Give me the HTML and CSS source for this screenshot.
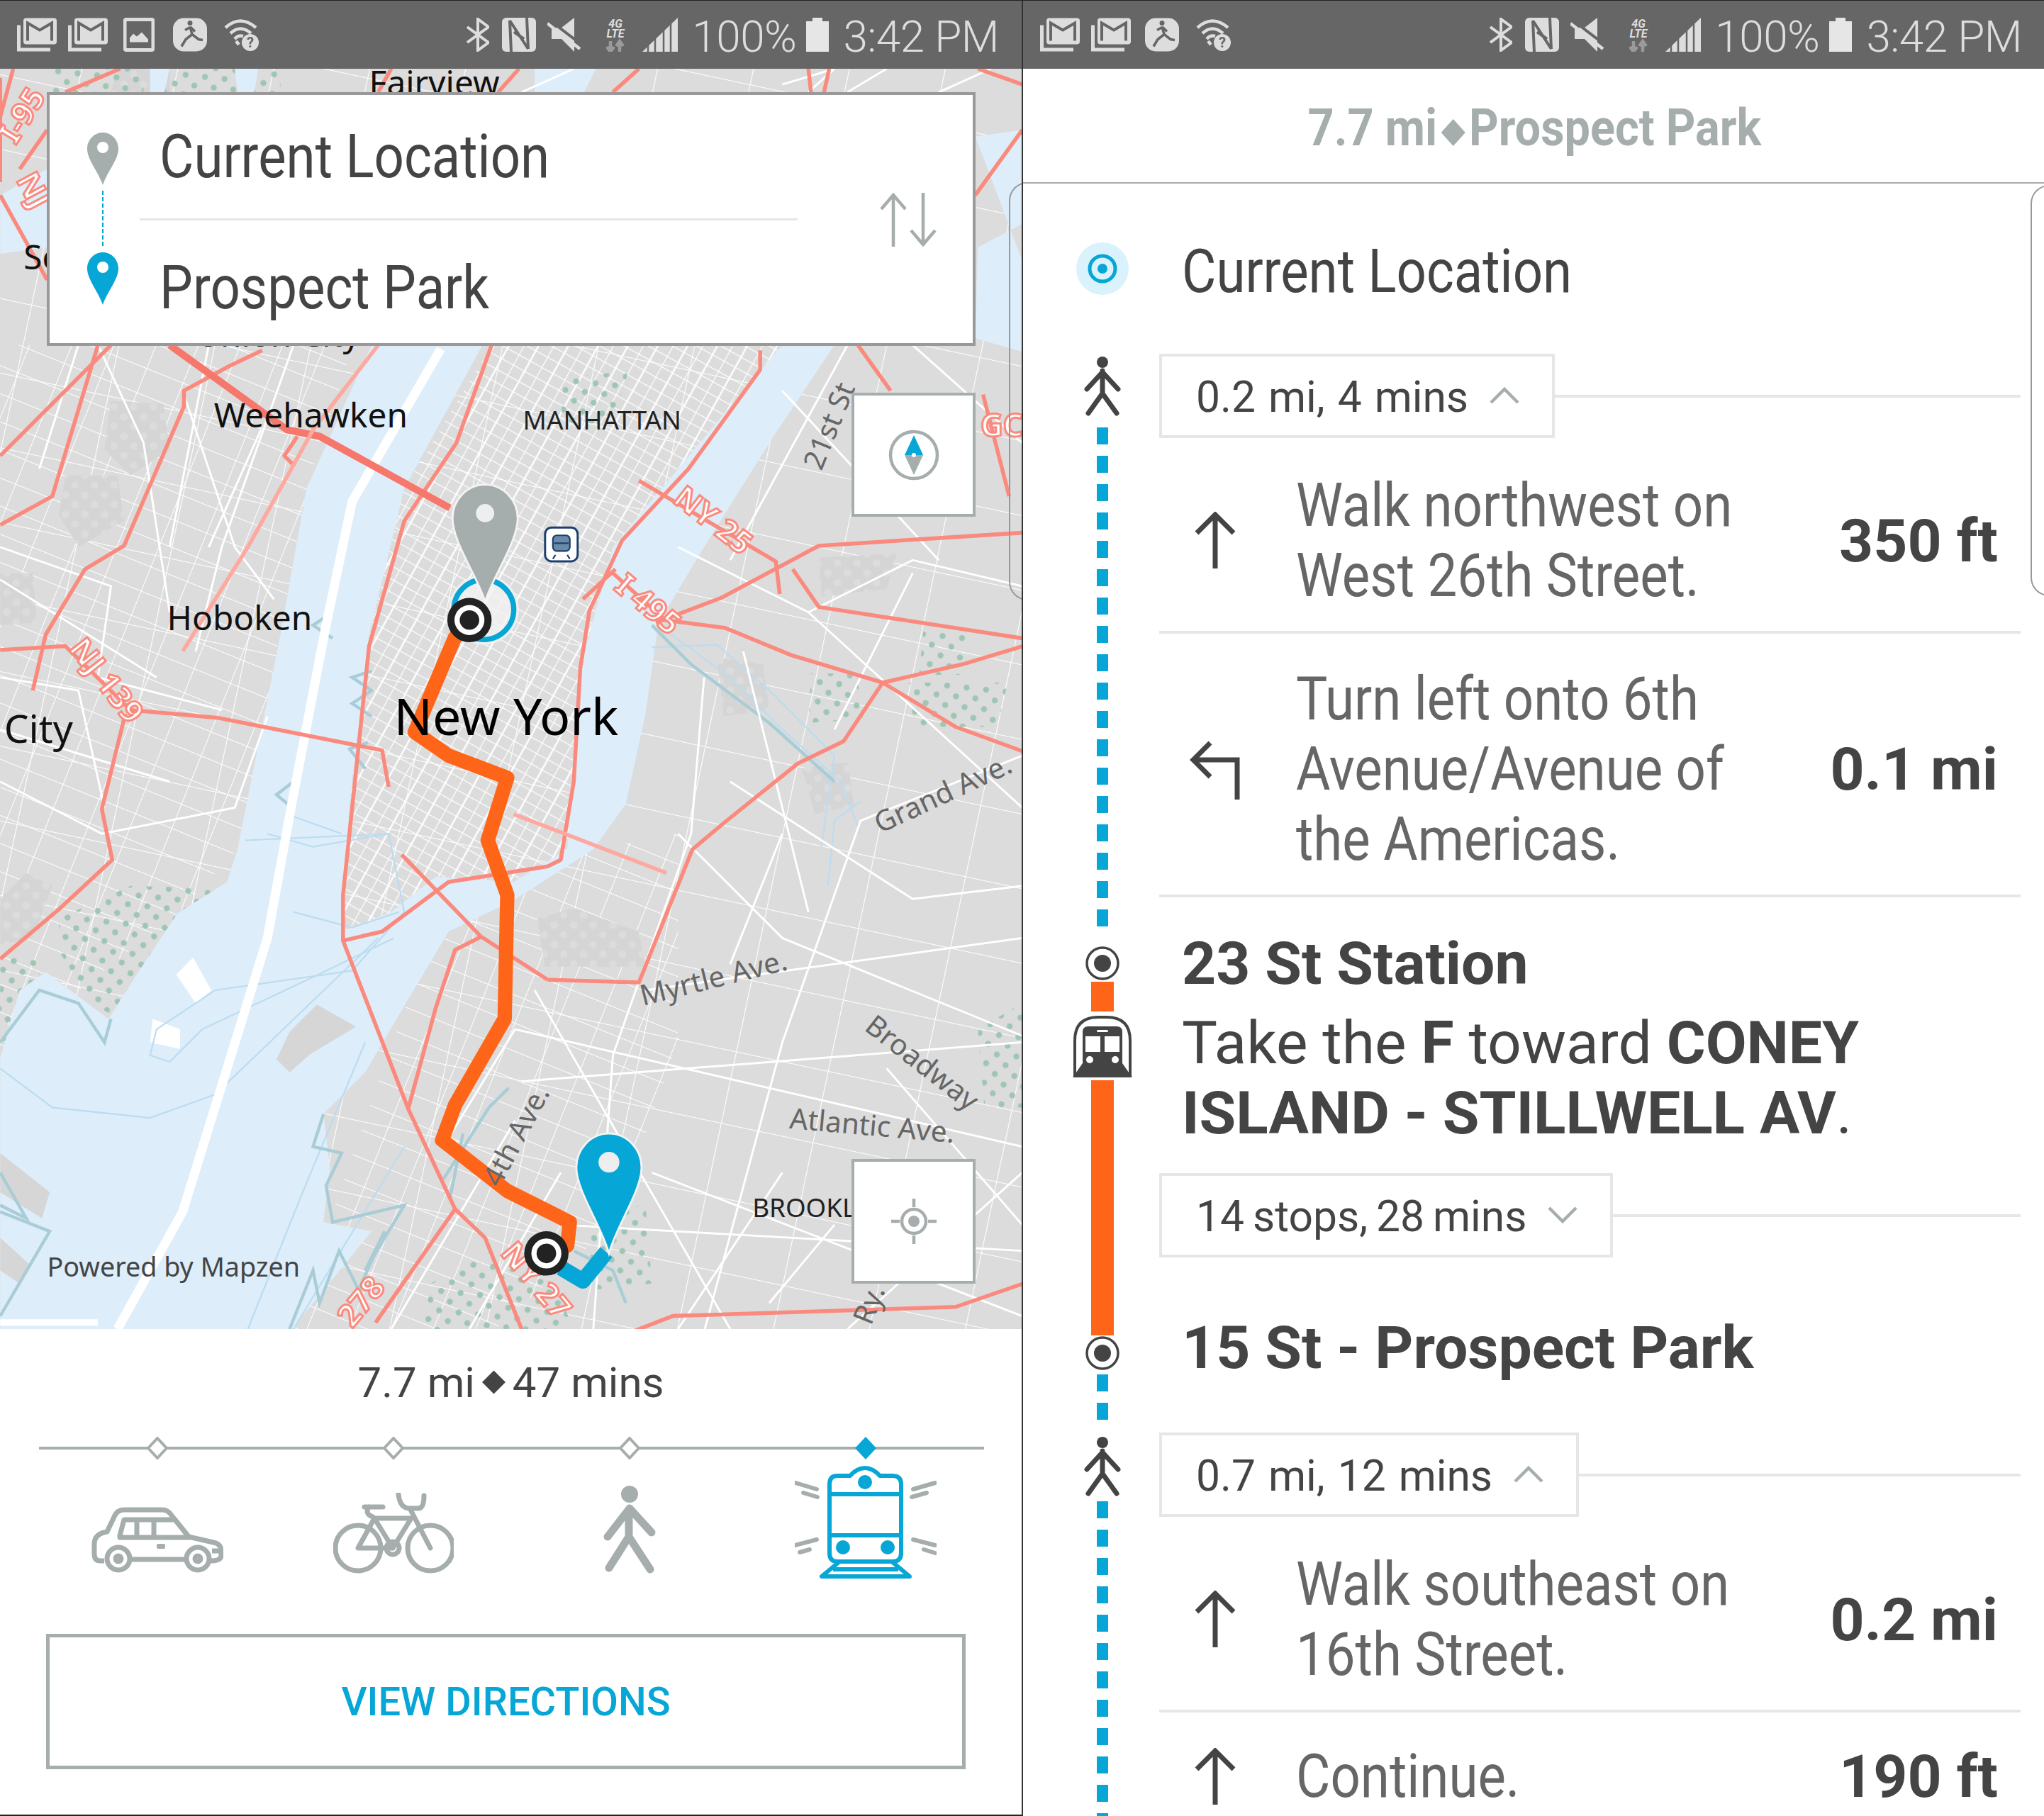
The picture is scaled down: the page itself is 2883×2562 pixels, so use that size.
FILE: index.html
```html
<!DOCTYPE html>
<html lang="en">
<head>
<meta charset="utf-8">
<title>Route directions</title>
<link rel="stylesheet" href="styles.css">
</head>
<body>
<svg class="defs" width="0" height="0" aria-hidden="true">
  <defs>
    <symbol id="i-mail" viewBox="0 0 56 47">
      <path d="M2.500 10V44.500H47" fill="none" stroke="#ddd" stroke-width="5"/>
      <rect x="9" y="0" width="47" height="37" rx="4" fill="#ddd"/>
      <path d="M15 32V7L32 17L49 7V32" fill="none" stroke="#666" stroke-width="4"/>
    </symbol>
    <symbol id="i-pic" viewBox="0 0 44 47">
      <rect x="2" y="2" width="40" height="43" rx="2" fill="none" stroke="#ddd" stroke-width="5"/>
      <path d="M9 34V28L14 22L19 26L26 20L35 30V34Z" fill="#ddd"/>
    </symbol>
    <symbol id="i-run" viewBox="0 0 48 47">
      <rect x="0" y="0" width="48" height="47" rx="15" fill="#ddd"/>
      <circle cx="24" cy="7" r="3.500" fill="#666"/>
      <path d="M24 12L27 23L36 30L42 31M27 23L18 30L12 40M24 13L17 17M25 13L31 19" fill="none" stroke="#666" stroke-width="3.500"/>
    </symbol>
    <symbol id="i-wifi" viewBox="0 0 49 46">
      <path d="M2 13Q23 -6 45 13M9 21Q23 8 38 21M15 29Q20 23 27 25M21 37L17 32" fill="none" stroke="#ddd" stroke-width="4.500"/>
      <circle cx="37" cy="34" r="12" fill="#ddd"/>
      <text x="37" y="41" class="wifi-q">?</text>
    </symbol>
    <symbol id="i-bt" viewBox="0 0 32 48">
      <path d="M1 13L31 35L16 46V2L31 13L1 35" fill="none" stroke="#ddd" stroke-width="4"/>
    </symbol>
    <symbol id="i-nfc" viewBox="0 0 48 48">
      <rect x="0" y="0" width="48" height="48" rx="6" fill="#ddd"/>
      <path d="M13 48L11 4M35 0L37 44M11 4L37 44M17 20L31 30" fill="none" stroke="#666" stroke-width="4"/>
    </symbol>
    <symbol id="i-mute" viewBox="0 0 48 48">
      <path d="M38 0V48L20 30H6V14H20Z" fill="#ddd"/>
      <path d="M0 8L46 44" stroke="#ddd" stroke-width="4.500"/>
      <path d="M0 1L47 37" stroke="#666" stroke-width="4"/>
    </symbol>
    <symbol id="i-lte" viewBox="0 0 30 48">
      <text x="15" y="14" class="lte">4G</text>
      <text x="15" y="28" class="lte">LTE</text>
      <path d="M8 33V47M3 41L8 48L13 41M21 48V34M16 40L21 33L26 40" fill="none" stroke="#9a9a9a" stroke-width="4.500"/>
    </symbol>
    <symbol id="i-signal" viewBox="0 0 50 48">
      <path d="M0 48L50 0V48Z" fill="#ddd"/>
      <path d="M8 48V30M18 48V20M30 48V10M40 48V2" stroke="#666" stroke-width="2.500"/>
    </symbol>
    <symbol id="i-bat" viewBox="0 0 32 48">
      <path d="M9 0H23V5H32V48H0V5H9Z" fill="#e6e6e6"/>
    </symbol>
    <symbol id="i-stop" viewBox="0 0 48 48">
      <circle cx="24" cy="24" r="22" fill="#fff" stroke="#444" stroke-width="3.500"/>
      <circle cx="24" cy="24" r="12" fill="#444"/>
    </symbol>
    <symbol id="i-walk" viewBox="0 0 52 86">
      <circle cx="26" cy="8" r="8" fill="#444"/>
      <path d="M26 20L26 52L6 80M26 52L46 80M26 22L4 46M26 22L48 46" fill="none" stroke="#444" stroke-width="7" stroke-linecap="round"/>
    </symbol>
    <symbol id="i-up" viewBox="0 0 60 82">
      <path d="M30 80V4M4 30L30 4L56 30" fill="none" stroke="#444" stroke-width="7"/>
    </symbol>
    <symbol id="i-left" viewBox="0 0 74 84">
      <path d="M68 84V28H6M30 4L6 28L30 52" fill="none" stroke="#444" stroke-width="7"/>
    </symbol>
    <pattern id="p-park" width="15" height="15" patternUnits="userSpaceOnUse" patternTransform="rotate(6)">
      <circle cx="5" cy="5" r="2.300" fill="#9fc6b4"/>
      <circle cx="12.500" cy="12.500" r="2.300" fill="#9fc6b4"/>
    </pattern>
    <pattern id="p-gray" width="15" height="15" patternUnits="userSpaceOnUse">
      <rect width="15" height="15" fill="#d5d5d5"/>
      <circle cx="5" cy="5" r="3" fill="#dcdcdc"/>
      <circle cx="12.500" cy="12.500" r="3" fill="#dcdcdc"/>
    </pattern>
    <pattern id="p-dense" width="20" height="9" patternUnits="userSpaceOnUse" patternTransform="rotate(29)">
      <path d="M0 0H20M0 0V9M10 0V9" stroke="#fff" stroke-width="1.300"/>
    </pattern>
    <pattern id="p-mid" width="30" height="20" patternUnits="userSpaceOnUse" patternTransform="rotate(22)">
      <path d="M0 0H30M0 0V20" stroke="#fff" stroke-width="1.100"/>
    </pattern>
    <pattern id="p-sparse" width="72" height="56" patternUnits="userSpaceOnUse" patternTransform="rotate(12)">
      <path d="M0 0H72M0 0V56" stroke="#fff" stroke-width="1.200"/>
    </pattern>
  </defs>
</svg>

<main class="page">
  <section class="phone">
    <header class="status">
      <div class="status-left">
        <svg class="si si-mail"><use href="#i-mail"/></svg>
        <svg class="si si-mail"><use href="#i-mail"/></svg>
        <svg class="si si-pic"><use href="#i-pic"/></svg>
        <svg class="si si-run"><use href="#i-run"/></svg>
        <svg class="si si-wifi"><use href="#i-wifi"/></svg>
      </div>
      <div class="status-right">
        <svg class="si si-bt"><use href="#i-bt"/></svg>
        <svg class="si si-nfc"><use href="#i-nfc"/></svg>
        <svg class="si si-mute"><use href="#i-mute"/></svg>
        <svg class="si si-lte"><use href="#i-lte"/></svg>
        <svg class="si si-signal"><use href="#i-signal"/></svg>
        <span class="s-text s-pct">100%</span>
        <svg class="si si-bat"><use href="#i-bat"/></svg>
        <span class="s-text s-time">3:42 PM</span>
      </div>
    </header>

    <div class="map">
      <svg class="map-svg" viewBox="0 53 784 967" width="1442" height="1778">
        <rect x="0" y="53" width="784" height="967" fill="#dcdcdc"/>
        <rect x="0" y="53" width="784" height="967" fill="url(#p-sparse)"/>
        <path d="M0 265H271L235 375L215 487L182 652L136 701L60 760L0 790Z" fill="url(#p-mid)"/>
        <path d="M313 767L344 715L394 691L455 652L520 640L520 800L470 940L380 1020L222 1022Z" fill="url(#p-mid)"/>
        <path d="M377 265L310 375L283 487L268 617L263 715L300 700L334 673L394 677L435 652L445 513L470 420L520 360L570 300L600 265Z" fill="url(#p-dense)"/>

        <g class="gray-parks">
          <path d="M85 308L125 310L130 345L100 365L80 345Z"/>
          <path d="M50 365L90 365L95 400L60 420L45 395Z"/>
          <path d="M628 428L688 425L680 452L630 458Z"/>
          <path d="M0 440L25 440L28 478L0 480Z"/>
          <path d="M412 705L440 697L490 715L495 742L418 742Z"/>
          <path d="M615 590L650 585L655 618L625 625Z"/>
          <path d="M550 505L585 510L590 545L555 550Z"/>
          <path d="M0 690L20 670L40 680L25 720L0 725Z"/>
          <path d="M90 53H130V71H85Z"/>
        </g>
        <g class="parks">
          <path d="M432 290L482 285L470 325L430 325Z"/>
          <path d="M622 517L657 517L662 552L620 555Z"/>
          <path d="M697 524L773 524L765 558L700 558Z"/>
          <path d="M708 485L743 485L740 518L705 518Z"/>
          <path d="M45 705L100 680L172 682L172 692L130 735L105 790L70 770L45 730Z"/>
          <path d="M0 735L30 735L30 790L0 800Z"/>
          <path d="M330 985L365 965L425 985L440 1020H325Z"/>
          <path d="M750 790L784 770V850L755 850Z"/>
          <path d="M450 930L495 925L500 985L455 990Z"/>
          <path d="M40 53H110V71H40Z"/>
          <path d="M125 53H215V71H125Z"/>
        </g>

        <path class="water" d="M285 265H370L310 375L283 487L268 617L263 690L263 715L300 700L334 673L394 677L435 652L445 513L470 420L520 360L570 300L600 265H640L590 340L540 420L510 470L505 478L495 548L480 617L455 652L394 691L344 715L313 767L280 823L248 855L253 896L248 938L285 945L222 1022H0V812L15 760L35 746L83 782L106 746L136 701L174 677L182 652L215 487L235 375Z"/>
        <path class="water" d="M410 53H457L448 71H410Z"/>
        <path class="water" d="M115 53H130L126 71H115Z"/>
        <path class="water" d="M180 53H198L195 71H182Z"/>
        <path class="water" d="M748 105L784 100V172L750 190L748 260L784 270V200Z"/>
        <path class="water" d="M0 150L36 130V190L0 195Z"/>
        <path class="land" d="M243 771L273 788L238 809L222 823L212 813L222 792Z"/>
        <path class="land" d="M0 885L38 915L32 935L0 915Z"/>
        <path class="land" d="M0 950L22 970L15 985L0 975Z"/>
        <path class="white" d="M148 735L162 760L150 770L135 748Z"/>
        <path class="white" d="M117 782L138 790L138 805L115 800Z"/>

        <g class="ferry">
          <path d="M205 640L240 650L298 640L310 700L270 745L165 760L120 790L115 810L130 815L155 790L240 750L302 720"/>
          <path d="M0 820L40 850L115 858L165 840L290 720"/>
          <path d="M225 700L270 712L306 700"/>
          <path d="M190 1020L230 920L280 800"/>
          <path d="M225 1020L310 880"/>
          <path d="M220 625L262 640M188 645L300 640"/>
          <path d="M505 480L560 520L600 560L645 600L660 640"/>
          <path d="M500 497L550 495L590 530L640 580L630 650M660 615L640 630L635 680"/>
        </g>
        <g class="shore">
          <path d="M0 800L30 760L60 770L80 800L85 782"/>
          <path d="M248 855L240 880L262 885L250 910L255 938L310 925L280 975L295 945L275 990L260 960L245 1000L240 975L222 1020"/>
          <path d="M340 905L375 850L390 835M355 870L345 920"/>
          <path d="M0 1010L38 945L0 930"/>
          <path d="M0 925L20 935L0 900"/>
          <path d="M500 480L530 510L590 555L640 600"/>
          <path d="M440 960L470 975L480 1000"/>
          <path d="M285 515L270 520L285 530L270 540L285 550M282 570L268 575L280 590M255 470L240 480L255 490M225 600L212 610L224 620"/>
        </g>
        <path class="stripe" d="M338 268L270 385L250 480L225 610L205 720L140 930L90 1020"/>
        <path class="stripe thin" d="M0 1015H75"/>

        <g class="roads">
          <path d="M0 420L85 450L75 520L170 545M0 520L60 530L80 620M0 600L78 640L180 620L205 550"/>
          <path d="M140 300L180 420L210 460M75 265L110 340L130 470M200 330L160 420"/>
          <path d="M520 640L600 720L784 795M540 520L530 640L470 810L455 1020M570 500L620 700M620 470L784 620"/>
          <path d="M495 760L784 720M395 790L784 880M430 940L784 960M400 830L784 800M410 760L560 1020"/>
          <path d="M600 300L720 430M650 265L560 430M700 265L784 340M520 420L620 470L700 430L784 450"/>
          <path d="M540 1022L600 800L660 630L784 580M680 820L784 940M650 1020L784 900M590 1000L640 940"/>
          <path d="M600 65L640 53M440 53L400 71M620 71L640 53M650 71L680 53M720 71L760 53"/>
          <path d="M340 880L395 790M300 1020L395 860M360 1020L430 900"/>
          <path d="M0 445L120 520M0 560L130 600M60 265L30 360M160 265L130 420M225 265L170 420L150 500"/>
          <path d="M560 600L700 690L784 680M600 640L560 740M700 440L640 560M500 900L784 1010M520 1020L600 900"/>
        </g>

        <g class="hw">
          <path d="M0 350L60 290L85 265"/>
          <path d="M75 265L40 381L0 403"/>
          <path d="M201 269L176 281L141 300L141 312L95 419L65 437L35 487L25 530"/>
          <path d="M377 265L350 340L310 400L283 496L263 687L263 722L313 851L349 928L288 1015"/>
          <path d="M0 499L50 496L100 545L167 551L293 576L298 604"/>
          <path d="M96 548L78 621L86 660L45 698L0 736"/>
          <path d="M583 269L583 284L528 360L477 415L452 469L445 513L440 600L430 660L420 665L344 677L293 715L263 722"/>
          <path d="M420 752L490 754L531 652L556 631L612 586L647 569L677 524L738 510L788 495"/>
          <path d="M677 524L607 503L556 482L510 476L470 440"/>
          <path d="M677 524L733 558L788 578"/>
          <path d="M308 656L369 719L420 752"/>
          <path d="M369 719L349 729L334 774L313 851"/>
          <path d="M490 369L595 431L598 456"/>
          <path d="M784 409L628 419L553 459L503 478"/>
          <path d="M608 437L628 466L784 490"/>
          <path d="M658 265L683 300"/>
          <path d="M754 303L774 381"/>
          <path d="M447 460L472 437"/>
          <path d="M485 1022L516 1010L733 1003L788 984"/>
          <path d="M0 60L0 140M10 53L0 90M15 130L36 100M92 53L50 71M290 71L300 53M382 71L398 53M470 71L490 53M620 53L622 71M636 53L632 71"/>
          <path d="M748 150L784 100"/>
          <path d="M0 150L36 215"/>
          <path d="M400 1020L372 950L349 928"/>
          <path d="M750 53L784 65"/>
          <path d="M228 335L218 350L226 358"/>
        </g>
        <path class="hw-thick" d="M130 265L220 330L245 335L345 390"/>
        <path class="hw-pale" d="M394 625L511 670"/>
        <path class="hw-pale" d="M290 265L240 330L190 420L140 500"/>

        <path class="route-walk" d="M430 973L447 983L465 961"/>
        <path class="route" d="M349 489L318 562L344 580L389 597L374 645L389 687L387 782L349 848L339 875L389 914L437 938L435 956"/>

        <text class="lb lb-city" x="283" y="73">Fairview</text>
        <text class="lb lb-city" x="18" y="207">Sc</text>
        <text class="lb lb-city" x="150" y="266">Union City</text>
        <text class="lb lb-city" x="164" y="328">Weehawken</text>
        <text class="lb lb-small" x="401" y="330">MANHATTAN</text>
        <text class="lb lb-city" x="128" y="484">Hoboken</text>
        <text class="lb lb-big" x="3" y="570">City</text>
        <text class="lb lb-ny" x="302" y="564">New York</text>
        <text class="lb lb-small" x="577" y="934">BROOKLYN</text>
        <text class="lb lb-road" transform="translate(630 362) rotate(-68)">21st St</text>
        <text class="lb lb-road" transform="translate(675 640) rotate(-25)">Grand Ave.</text>
        <text class="lb lb-road" transform="translate(493 772) rotate(-14)">Myrtle Ave.</text>
        <text class="lb lb-road" transform="translate(662 790) rotate(38)">Broadway</text>
        <text class="lb lb-road" transform="translate(605 866) rotate(5)">Atlantic Ave.</text>
        <text class="lb lb-road" transform="translate(383 912) rotate(-62)">4th Ave.</text>
        <text class="lb lb-road" transform="translate(668 1018) rotate(-68)">Ry.</text>
        <text class="lb lb-credit" x="36" y="980">Powered by Mapzen</text>

        <text class="shield" transform="translate(52 498) rotate(52)">NJ 139</text>
        <text class="shield" transform="translate(515 385) rotate(38)">NY 25</text>
        <text class="shield" transform="translate(470 452) rotate(40)">I 495</text>
        <text class="shield" transform="translate(383 962) rotate(50)">NY 27</text>
        <text class="shield" transform="translate(270 1020) rotate(-50)">278</text>
        <text class="shield" transform="translate(12 138) rotate(62)">NJ</text>
        <text class="shield" transform="translate(12 112) rotate(-58)">I-95</text>
        <text class="shield" x="752" y="335">GC</text>

        <g class="transit-sign">
          <rect x="418" y="405" width="25" height="26" rx="5" fill="#fff" stroke="#1d3f6e" stroke-width="1.600"/>
          <rect x="424" y="411" width="13" height="12" rx="3" fill="#6a8aa8" stroke="#1d3f6e" stroke-width="1.200"/>
          <path d="M425 417H436M426 426L424 429M435 426L437 429" stroke="#1d3f6e" stroke-width="1.200"/>
        </g>
        <circle cx="371" cy="468" r="27" fill="#f2f2f2" opacity=".8"/>
        <circle cx="371" cy="468" r="23" fill="none" stroke="#06a6d6" stroke-width="4"/>
        <path d="M372 372C358 372 347 384 347 398C347 416 366 442 372 462C378 442 397 416 397 398C397 384 386 372 372 372Z" fill="#a6adad" stroke="#f4f4f4" stroke-width="1.500"/>
        <circle cx="372" cy="394" r="7" fill="#eee"/>
        <circle cx="360" cy="476" r="17" fill="#222"/>
        <circle cx="360" cy="476" r="11.500" fill="#fff"/>
        <circle cx="360" cy="476" r="7.500" fill="#222"/>
        <circle cx="419" cy="962" r="17" fill="#222"/>
        <circle cx="419" cy="962" r="11.500" fill="#fff"/>
        <circle cx="419" cy="962" r="7.500" fill="#222"/>
        <path d="M467 870C453 870 442 882 442 896C442 914 461 940 467 962C473 940 492 914 492 896C492 882 481 870 467 870Z" fill="#06a6d6" stroke="#f4f4f4" stroke-width="1.500"/>
        <circle cx="467" cy="892" r="8" fill="#eee"/>
      </svg>

      <div class="edge edge-map"></div>

      <div class="search-card">
        <div class="pins">
          <svg class="pin" viewBox="0 0 44 74"><path d="M22 0C10 0 0 10 0 23C0 38 16 56 22 74C28 56 44 38 44 23C44 10 34 0 22 0Z" fill="#a6adad"/><circle cx="22" cy="21" r="8" fill="#fff"/></svg>
          <div class="pin-link"></div>
          <svg class="pin" viewBox="0 0 44 74"><path d="M22 0C10 0 0 10 0 23C0 38 16 56 22 74C28 56 44 38 44 23C44 10 34 0 22 0Z" fill="#06a6d6"/><circle cx="22" cy="21" r="8" fill="#fff"/></svg>
        </div>
        <div class="places">
          <div class="place place-from"><span class="cond">Current Location</span></div>
          <div class="place place-to"><span class="cond">Prospect Park</span></div>
        </div>
        <svg class="swap" viewBox="0 0 80 76"><path d="M19 76V3M2 23L19 3L36 23M61 0V73M44 53L61 73L78 53" fill="none" stroke="#a6adad" stroke-width="4.500"/></svg>
      </div>

      <button class="map-btn map-btn-compass" type="button" aria-label="Compass">
        <svg viewBox="0 0 80 80" class="map-btn-ic"><circle cx="40" cy="40" r="33" fill="none" stroke="#a6adad" stroke-width="4.500"/><path d="M27 40L40 12L53 40Z" fill="#06a6d6"/><path d="M27 40L40 68L53 40Z" fill="#a6adad"/><circle cx="40" cy="40" r="3" fill="#fff"/></svg>
      </button>
      <button class="map-btn map-btn-locate" type="button" aria-label="Locate">
        <svg viewBox="0 0 80 80" class="map-btn-ic"><circle cx="40" cy="40" r="17" fill="none" stroke="#a6adad" stroke-width="4.500"/><circle cx="40" cy="40" r="8" fill="#a6adad"/><path d="M40 8V20M40 60V72M8 40H20M60 40H72" stroke="#a6adad" stroke-width="4.500"/></svg>
      </button>
    </div>

    <div class="trip">
      <div class="summary">
        <span>7.7 mi</span><svg class="dia" viewBox="0 0 32 32"><path d="M16 0L32 16L16 32L0 16Z" fill="#444"/></svg><span>47 mins</span>
      </div>
      <div class="modes">
        <div class="mode">
          <svg class="dia-mode" viewBox="0 0 30 32"><path d="M15 2L28 16L15 30L2 16Z" fill="#fff" stroke="#a6adad" stroke-width="4"/></svg>
          <svg class="m-car" viewBox="0 0 186 94">
            <g fill="none" stroke="#a6adad" stroke-width="7" stroke-linejoin="round">
              <path d="M18 76H12Q4 76 4 66V52Q4 38 22 35L32 14Q36 4 46 4H100Q108 4 113 12L137 42L172 50Q183 52 183 62V68Q183 76 168 76"/>
              <path d="M54 74H132"/>
              <path d="M40 40L46 18H118L138 43H40Z"/>
              <path d="M64 18V42M88 18V42M170 62H184"/>
              <circle cx="38" cy="73" r="16"/><circle cx="150" cy="73" r="16"/>
              <circle cx="38" cy="73" r="4"/><circle cx="150" cy="73" r="4"/>
            </g>
            <rect x="92" y="52" width="12" height="7" rx="2" fill="#a6adad"/>
          </svg>
        </div>
        <div class="mode">
          <svg class="dia-mode" viewBox="0 0 30 32"><path d="M15 2L28 16L15 30L2 16Z" fill="#fff" stroke="#a6adad" stroke-width="4"/></svg>
          <svg class="m-bike" viewBox="0 0 170 114">
            <g fill="none" stroke="#a6adad" stroke-width="7" stroke-linejoin="round" stroke-linecap="round">
              <circle cx="35" cy="78" r="32"/><circle cx="137" cy="78" r="32"/>
              <path d="M58 36H110M58 36L35 78H84M58 36L84 78L110 36"/>
              <path d="M108 22L137 78M108 22H120Q128 22 128 4M108 22Q94 22 92 2"/>
              <path d="M44 20H70M50 20Q44 30 56 34"/>
              <circle cx="84" cy="78" r="9"/>
            </g>
          </svg>
        </div>
        <div class="mode">
          <svg class="dia-mode" viewBox="0 0 30 32"><path d="M15 2L28 16L15 30L2 16Z" fill="#fff" stroke="#a6adad" stroke-width="4"/></svg>
          <svg class="m-walk" viewBox="0 0 74 124">
            <circle cx="37" cy="12" r="12" fill="#a6adad"/>
            <path d="M37 32L6 72M37 32L68 66M36 34L36 72L8 116M36 72L66 118" fill="none" stroke="#a6adad" stroke-width="11" stroke-linecap="round"/>
          </svg>
        </div>
        <div class="mode">
          <svg class="dia-mode" viewBox="0 0 30 32"><path d="M15 0L30 16L15 32L0 16Z" fill="#06a6d6"/></svg>
          <svg class="m-train" viewBox="40 52 200 162">
            <g fill="none" stroke="#06a6d6" stroke-width="6" stroke-linejoin="round">
              <path d="M100 66H118Q128 55 139 55Q150 55 160 66H178Q190 66 190 78V175Q190 187 178 187H100Q89 187 89 175V78Q89 66 100 66Z"/>
              <path d="M89 92H190M89 150H190"/>
              <path d="M102 188L78 208H202L178 188M94 198H186"/>
            </g>
            <circle cx="139" cy="75" r="10" fill="#06a6d6"/><circle cx="108" cy="167" r="10" fill="#06a6d6"/><circle cx="171" cy="167" r="10" fill="#06a6d6"/>
            <path d="M41 76L71 85M52 90L72 96M238 76L207 85M226 90L205 96M71 156L40 164M61 170L47 174M207 156L238 164M222 170L238 175" stroke="#a6adad" stroke-width="6" stroke-linecap="round"/>
          </svg>
        </div>
      </div>
      <button class="view-btn" type="button">VIEW DIRECTIONS</button>
    </div>
  </section>

  <section class="phone phone-right">
    <header class="status">
      <div class="status-left">
        <svg class="si si-mail"><use href="#i-mail"/></svg>
        <svg class="si si-mail"><use href="#i-mail"/></svg>
        <svg class="si si-run"><use href="#i-run"/></svg>
        <svg class="si si-wifi"><use href="#i-wifi"/></svg>
      </div>
      <div class="status-right">
        <svg class="si si-bt"><use href="#i-bt"/></svg>
        <svg class="si si-nfc"><use href="#i-nfc"/></svg>
        <svg class="si si-mute"><use href="#i-mute"/></svg>
        <svg class="si si-lte"><use href="#i-lte"/></svg>
        <svg class="si si-signal"><use href="#i-signal"/></svg>
        <span class="s-text s-pct">100%</span>
        <svg class="si si-bat"><use href="#i-bat"/></svg>
        <span class="s-text s-time">3:42 PM</span>
      </div>
    </header>

    <div class="dir-head">
      <span class="cond-c"><span>7.7 mi</span><svg class="dia dia-head" viewBox="0 0 32 32"><path d="M16 0L32 16L16 32L0 16Z" fill="#a6adad"/></svg><span>Prospect Park</span></span>
    </div>

    <div class="route-body">
      <div class="edge edge-list"></div>
      <div class="rail">
        <svg class="rail-loc" viewBox="0 0 74 74"><circle cx="37" cy="37" r="37" fill="#d9f2fb"/><circle cx="37" cy="37" r="18" fill="none" stroke="#06a6d6" stroke-width="5"/><circle cx="37" cy="37" r="7" fill="#06a6d6"/></svg>
        <svg class="rail-walk rail-walk-a"><use href="#i-walk"/></svg>
        <div class="dash dash-a"></div>
        <svg class="rail-stop rail-stop-a"><use href="#i-stop"/></svg>
        <div class="line line-a"></div>
        <svg class="rail-train" viewBox="0 0 84 88">
          <path d="M3 88V36Q3 3 36 3H48Q81 3 81 36V88" fill="none" stroke="#444" stroke-width="4"/>
          <path d="M22 16H62Q70 16 70 24V68L84 88H0L14 68V24Q14 16 22 16Z" fill="#444"/>
          <rect x="18" y="30" width="21" height="22" fill="#fff"/><rect x="45" y="30" width="21" height="22" fill="#fff"/>
          <circle cx="24" cy="63" r="5" fill="#fff"/><circle cx="60" cy="63" r="5" fill="#fff"/>
          <rect x="34" y="21" width="16" height="3" rx="1.500" fill="#fff"/>
        </svg>
        <div class="line line-b"></div>
        <svg class="rail-stop rail-stop-b"><use href="#i-stop"/></svg>
        <div class="dash dash-b"></div>
        <svg class="rail-walk rail-walk-b"><use href="#i-walk"/></svg>
        <div class="dash dash-c"></div>
      </div>

      <div class="legs">
        <div class="leg-start"><span class="cond">Current Location</span></div>

        <div class="chip-row">
          <div class="chip"><span class="chip-text">0.2 mi, 4 mins</span><svg class="chev" viewBox="0 0 42 24"><path d="M2 22L21 3L40 22" fill="none" stroke="#a6adad" stroke-width="4.500"/></svg></div>
        </div>
        <div class="step step-first">
          <svg class="step-ic"><use href="#i-up"/></svg>
          <div class="step-text"><span class="cond">Walk northwest on<br>West 26th Street.</span></div>
          <strong class="step-dist">350 ft</strong>
        </div>
        <div class="step">
          <svg class="step-ic step-ic-turn"><use href="#i-left"/></svg>
          <div class="step-text"><span class="cond">Turn left onto 6th<br>Avenue/Avenue of<br>the Americas.</span></div>
          <strong class="step-dist">0.1 mi</strong>
        </div>

        <h2 class="station station-a">23 St Station</h2>
        <p class="take">Take the <b>F</b> toward <b>CONEY<br>ISLAND - STILLWELL AV</b>.</p>
        <div class="chip-row chip-row-b">
          <div class="chip"><span class="chip-text chip-text-tight">14 stops, 28 mins</span><svg class="chev" viewBox="0 0 42 24"><path d="M2 2L21 21L40 2" fill="none" stroke="#a6adad" stroke-width="4.500"/></svg></div>
        </div>
        <h2 class="station station-b">15 St - Prospect Park</h2>

        <div class="chip-row chip-row-c">
          <div class="chip"><span class="chip-text">0.7 mi, 12 mins</span><svg class="chev" viewBox="0 0 42 24"><path d="M2 22L21 3L40 22" fill="none" stroke="#a6adad" stroke-width="4.500"/></svg></div>
        </div>
        <div class="step step-first">
          <svg class="step-ic"><use href="#i-up"/></svg>
          <div class="step-text"><span class="cond">Walk southeast on<br>16th Street.</span></div>
          <strong class="step-dist">0.2 mi</strong>
        </div>
        <div class="step step-last">
          <svg class="step-ic"><use href="#i-up"/></svg>
          <div class="step-text"><span class="cond">Continue.</span></div>
          <strong class="step-dist">190 ft</strong>
        </div>
      </div>
    </div>
  </section>
</main>
</body>
</html>
```

FILE: styles.css
```css
* { box-sizing: border-box; }
html, body { margin: 0; padding: 0; background: #fff; }
body { font-family: Roboto, "Liberation Sans", sans-serif; color: #444; }
.defs { position: absolute; }
.wifi-q { font: 700 20px Roboto, sans-serif; fill: #666; text-anchor: middle; }
.lte { font: italic 700 16px Roboto, sans-serif; fill: #ddd; text-anchor: middle; }

.page { display: flex; width: 2883px; height: 2562px; overflow: hidden; border-top: 1px solid #222; }
.phone { width: 1441px; height: 2561px; flex: none; border-bottom: 2px solid #222; display: flex; flex-direction: column; overflow: hidden; position: relative; }
.phone-right { width: 1442px; border-left: 2px solid #333; border-bottom: 0; }

/* status bar */
.status { height: 96px; flex: none; background: #666; display: flex; justify-content: space-between; align-items: flex-start; padding: 24px 0 0 24px; }
.status-left, .status-right { display: flex; align-items: flex-start; }
.status-right { padding-right: 32px; }
.phone-right .status-right { padding-right: 31px; }
.si { display: block; height: 48px; flex: none; }
.si-mail { width: 56px; margin-right: 16px; }
.si-pic { width: 44px; margin: 0 26px 0 6px; }
.si-run { width: 48px; margin-right: 24px; }
.phone-right .si-run { margin-left: 4px; }
.si-wifi { width: 49px; }
.si-bt { width: 32px; margin-right: 18px; }
.si-nfc { width: 48px; margin-right: 16px; }
.si-mute { width: 48px; margin-right: 33px; }
.si-lte { width: 30px; margin-right: 23px; }
.si-signal { width: 50px; margin-right: 20px; }
.si-bat { width: 32px; margin-right: 20px; }
.s-text { font-size: 62px; line-height: 48px; margin-top: 3px; font-weight: 300; color: #ddd; white-space: nowrap; letter-spacing: -.5px; }
.s-pct { margin-right: 14px; }

/* map */
.map { height: 1778px; flex: none; position: relative; overflow: hidden; background: #dcdcdc; }
.map-svg { display: block; }
.water { fill: #ddedfa; }
.land { fill: #d6d6d6; }
.white { fill: #fff; }
.gray-parks path { fill: url(#p-gray); }
.parks path { fill: url(#p-park); }
.ferry path { fill: none; stroke: #bcdcf0; stroke-width: 1.200; }
.shore path { fill: none; stroke: #a8cdd6; stroke-width: 2.400; }
.stripe { fill: none; stroke: #fff; stroke-width: 7; }
.stripe.thin { stroke-width: 5; }
.roads path { fill: none; stroke: #fff; stroke-width: 1.600; }
.hw path { fill: none; stroke: #fb8a7e; stroke-width: 3; stroke-linejoin: round; }
.hw-thick { fill: none; stroke: #f6776c; stroke-width: 5.500; }
.hw-pale { fill: none; stroke: #fda99f; stroke-width: 3; }
.route { fill: none; stroke: #ff6519; stroke-width: 11; stroke-linejoin: round; stroke-linecap: round; }
.route-walk { fill: none; stroke: #06a6d6; stroke-width: 12; stroke-linejoin: round; }
.lb { font-family: "Noto Sans", "Open Sans", sans-serif; }
.lb-city { font-size: 26px; fill: #111; }
.lb-small { font-size: 20px; fill: #222; }
.lb-big { font-size: 30px; fill: #111; }
.lb-ny { font-size: 39px; fill: #000; }
.lb-road { font-size: 22px; fill: #666; }
.lb-credit { font-size: 20.500px; fill: #444; }
.shield { font: 700 24px "Noto Sans", sans-serif; fill: #fff; stroke: #fb8a7e; stroke-width: 1.600; }

.edge { position: absolute; width: 30px; border: 2px solid #999; border-right: 0; border-radius: 26px 0 0 26px; }
.edge-map { left: 1423px; top: 160px; height: 590px; }
.edge-list { left: 1421px; top: 2px; height: 580px; }

/* search card */
.search-card { position: absolute; left: 66px; top: 33px; width: 1310px; height: 358px; background: #fff; border: 4px solid #999; display: flex; }
.pins { width: 127px; padding: 53px 0 0 53px; flex: none; display: flex; flex-direction: column; }
.pin { width: 44px; height: 74px; flex: none; }
.pin-link { width: 2px; height: 81px; margin: 8px 0 6px 21px; background: repeating-linear-gradient(#06a6d6 0 6px, transparent 6px 9px); flex: none; }
.places { width: 928px; flex: none; display: flex; flex-direction: column; }
.place { font-size: 85px; color: #444; padding-left: 28px; display: flex; align-items: center; }
.place-from { height: 177px; border-bottom: 3px solid #e6e6e6; }
.place-to { flex: 1; padding-top: 16px; }
.cond { display: inline-block; transform: scaleX(.875); transform-origin: 0 50%; white-space: nowrap; }
.cond-c { display: inline-flex; align-items: center; transform: scaleX(.9); white-space: nowrap; }
.swap { width: 80px; height: 76px; margin: 138px 0 0 116px; flex: none; }

.map-btn { position: absolute; left: 1201px; width: 175px; padding: 0; background: #fff; border: 4px solid #a6adad; display: flex; align-items: center; justify-content: center; }
.map-btn-compass { top: 457px; height: 175px; }
.map-btn-locate { top: 1538px; height: 176px; }
.map-btn-ic { width: 80px; height: 80px; }

/* trip panel */
.trip { flex: 1; display: flex; flex-direction: column; background: #fff; }
.summary { height: 150px; flex: none; display: flex; justify-content: center; align-items: center; font-size: 60px; color: #444; }
.dia { width: 33px; height: 36px; margin: 0 10px; flex: none; }
.modes { display: grid; grid-template-columns: repeat(4, 1fr); margin: 2px 55px 0; width: 1333px; height: 193px; background: linear-gradient(#a6adad, #a6adad) 0 14px / 100% 4px no-repeat; }
.mode { display: flex; flex-direction: column; align-items: center; justify-content: space-between; }
.dia-mode { width: 30px; height: 32px; flex: none; }
.m-car { width: 186px; height: 94px; }
.m-bike { width: 170px; height: 114px; }
.m-walk { width: 74px; height: 124px; }
.m-train { width: 200px; height: 162px; margin-bottom: -10px; }
.view-btn { margin: 85px 0 0 65px; width: 1297px; height: 191px; flex: none; background: #fff; border: 5px solid #a6adad; color: #06a6d6; font: 500 56px Roboto, sans-serif; display: flex; align-items: center; justify-content: center; }

/* directions */
.dir-head { height: 162px; flex: none; border-bottom: 2px solid #a6adad; display: flex; align-items: center; justify-content: center; font-size: 72px; font-weight: 700; color: #a6adad; padding: 6px 0 0 2px; }
.dia-head { width: 38px; height: 38px; margin: 14px 6px 0; }
.route-body { flex: 1; display: flex; position: relative; overflow: hidden; }
.rail { width: 192px; flex: none; padding-left: 32px; display: flex; flex-direction: column; align-items: center; }
.rail-loc { width: 74px; height: 74px; margin-top: 83px; flex: none; }
.rail-walk { width: 52px; height: 86px; flex: none; }
.rail-walk-a { margin-top: 87px; }
.rail-walk-b { margin-top: 18px; }
.dash { width: 16px; flex: none; background: repeating-linear-gradient(#06a6d6 0 24px, transparent 24px 40px); }
.dash-a { height: 707px; margin-top: 14px; }
.dash-b { height: 70px; margin-top: 6px; }
.dash-c { height: 446px; margin-top: 5px; }
.rail-stop { width: 48px; height: 48px; flex: none; }
.rail-stop-a { margin-top: 25px; }
.rail-stop-b { margin-top: 1px; }
.line { width: 32px; background: #ff6519; flex: none; }
.line-a { height: 42px; margin-top: 2px; }
.line-b { height: 360px; margin-top: 4px; }
.rail-train { width: 84px; height: 88px; margin-top: 5px; flex: none; }

.legs { width: 1215px; flex: none; }
.leg-start { height: 240px; display: flex; align-items: center; font-size: 85px; padding: 8px 0 0 32px; color: #444; }
.chip-row { display: flex; align-items: center; background: linear-gradient(#e6e6e6, #e6e6e6) 0 50% / 100% 4px no-repeat; }
.chip { height: 119px; background: #fff; border: 4px solid #e6e6e6; display: flex; align-items: center; padding: 3px 46px 0 48px; }
.chip-text { font-size: 60.500px; color: #444; word-spacing: 3px; white-space: nowrap; }
.chip-text-tight { word-spacing: -3px; }
.chev { width: 42px; height: 24px; margin: -4px 0 0 30px; flex: none; }
.chip-row-b { margin-top: 35px; }
.chip-row-c { margin-top: 70px; }
.step { display: flex; align-items: center; padding: 43px 32px 28px 0; border-bottom: 4px solid #e6e6e6; position: relative; }
.step-first { padding-top: 46px; }
.step-last { border-bottom: 0; padding-top: 41px; }
.step-ic { width: 60px; height: 82px; margin-left: 49px; flex: none; }
.step-ic-turn { width: 74px; height: 84px; margin-left: 42px; margin-right: 0; }
.step-text { flex: 1; margin-left: 84px; font-size: 85px; line-height: 99px; color: #666; }
.step-ic-turn + .step-text { margin-left: 77px; }
.step-dist { font-size: 84px; font-weight: 700; color: #444; white-space: nowrap; }
.station { margin: 0; padding-left: 32px; font-size: 84px; line-height: 99px; font-weight: 700; color: #444; }
.station-a { margin-top: 44px; }
.station-b { margin-top: 78px; }
.take { margin: 13px 0 0; padding-left: 32px; font-size: 84px; line-height: 99px; color: #444; }
.take b { font-weight: 700; }
```
